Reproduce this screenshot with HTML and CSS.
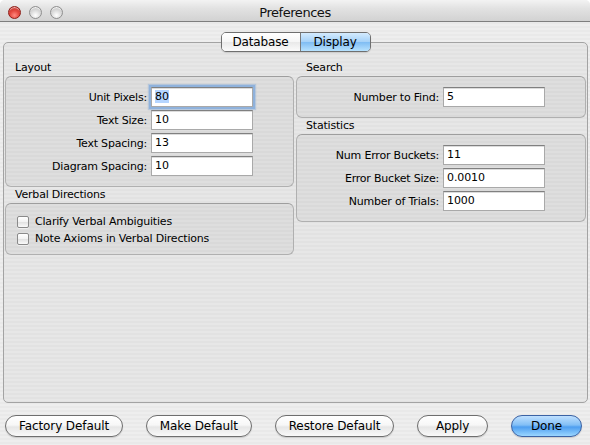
FILE: index.html
```html
<!DOCTYPE html>
<html>
<head>
<meta charset="utf-8">
<title>Preferences</title>
<link rel="stylesheet" href="styles.css">
</head>
<body>
<div class="window">
  <div class="titlebar">
    <div class="lights">
      <span class="light red"></span>
      <span class="light gray"></span>
      <span class="light gray"></span>
    </div>
    <div class="title">Preferences</div>
    <div></div>
  </div>

  <div class="tabs">
    <div class="tab tab-db">Database</div>
    <div class="tab tab-disp active">Display</div>
  </div>

  <div class="frame">
    <div class="col">
      <div class="group-title">Layout</div>
      <div class="group-box">
        <div class="row"><span class="label">Unit Pixels:</span><div class="field focus"><span class="sel">80</span></div></div>
        <div class="row"><span class="label">Text Size:</span><div class="field">10</div></div>
        <div class="row"><span class="label">Text Spacing:</span><div class="field">13</div></div>
        <div class="row"><span class="label">Diagram Spacing:</span><div class="field">10</div></div>
      </div>
      <div class="group-title">Verbal Directions</div>
      <div class="group-box checks">
        <div class="check-row"><span class="checkbox"></span><span class="label">Clarify Verbal Ambiguities</span></div>
        <div class="check-row"><span class="checkbox"></span><span class="label">Note Axioms in Verbal Directions</span></div>
      </div>
    </div>
    <div class="col">
      <div class="group-title">Search</div>
      <div class="group-box">
        <div class="row"><span class="label">Number to Find:</span><div class="field">5</div></div>
      </div>
      <div class="group-title">Statistics</div>
      <div class="group-box">
        <div class="row"><span class="label">Num Error Buckets:</span><div class="field">11</div></div>
        <div class="row"><span class="label">Error Bucket Size:</span><div class="field">0.0010</div></div>
        <div class="row"><span class="label">Number of Trials:</span><div class="field">1000</div></div>
      </div>
    </div>
  </div>

  <div class="buttons">
    <div class="btn">Factory Default</div>
    <div class="btn">Make Default</div>
    <div class="btn">Restore Default</div>
    <div class="btn">Apply</div>
    <div class="btn primary">Done</div>
  </div>
</div>
</body>
</html>
```
FILE: styles.css
```css
* { box-sizing: border-box; }
html, body { margin: 0; padding: 0; background: #fff; }
body { font-family: "DejaVu Sans", sans-serif; color: #000; }

.window {
  width: 590px;
  height: 445px;
  display: flex;
  flex-direction: column;
  border-radius: 5px 5px 0 0;
  overflow: hidden;
  background: repeating-linear-gradient(to bottom, #eeeeee 0 2px, #e9e9e9 2px 4px);
}

/* title bar */
.titlebar {
  height: 22px;
  flex: none;
  display: grid;
  grid-template-columns: 1fr auto 1fr;
  align-items: center;
  padding-top: 3px;
  background: linear-gradient(#f3f3f3, #e2e2e2 40%, #d2d2d2);
  border-bottom: 1px solid #7e7e7e;
}
.lights { display: flex; gap: 8px; padding-left: 8px; }
.light {
  width: 13px; height: 13px; border-radius: 50%;
  box-sizing: border-box;
}
.light.red {
  border: 1px solid #8e1d17;
  background: radial-gradient(circle at 50% 75%, #ff8a80 0, #e54a40 45%, #b2231c 100%);
  box-shadow: inset 0 2px 1px -1px rgba(255,255,255,.7);
}
.light.gray {
  border: 1px solid #8f8f8f;
  background: radial-gradient(circle at 50% 75%, #ffffff 0, #dadada 50%, #b6b6b6 100%);
  box-shadow: inset 0 2px 1px -1px rgba(255,255,255,.9);
}
.title {
  font-size: 13px;
  line-height: 15px;
  letter-spacing: -0.45px;
  color: #111;
}

/* tabs */
.tabs {
  align-self: center;
  display: flex;
  height: 20px;
  margin: 10px 0 -10px 1px;
  position: relative;
  z-index: 1;
  border: 1px solid #6f6f6f;
  border-radius: 5px;
  overflow: hidden;
  box-shadow: 0 1px 1px rgba(0,0,0,.12);
  font-size: 12px;
  letter-spacing: -0.15px;
}
.tab {
  display: flex;
  align-items: center;
  justify-content: center;
  height: 100%;
  background: linear-gradient(#ffffff, #f6f6f6 48%, #e9e9e9 52%, #fbfbfb);
}
.tab-db { width: 79px; border-right: 1px solid #7a7a7a; }
.tab-disp { width: 69px; }
.tab.active {
  background: linear-gradient(#d4ebfe, #a6d2f8 48%, #80bdf3 52%, #b7e2fe);
}

/* tab frame */
.frame {
  flex: 1;
  margin: 0 2px 0 3px;
  border: 1px solid #a3a3a3;
  border-radius: 5px;
  padding: 17px 1px 0;
  background: repeating-linear-gradient(to bottom, #e7e7e7 0 2px, #e2e2e2 2px 4px);
  display: grid;
  grid-template-columns: 289px 290px;
  column-gap: 2px;
  align-content: start;
  align-items: start;
}
.col { display: flex; flex-direction: column; }

.group-title {
  font-size: 11px;
  line-height: 16px;
  letter-spacing: -0.2px;
  padding-left: 10px;
}
.group-box {
  border: 1px solid #b0b0b0;
  border-top-color: #9e9e9e;
  border-radius: 6px;
  background: repeating-linear-gradient(to bottom, #dedede 0 2px, #d9d9d9 2px 4px);
  padding: 10px 0 10px;
  display: flex;
  flex-direction: column;
  gap: 3px;
}

.row {
  display: flex;
  justify-content: flex-end;
  align-items: center;
  gap: 4px;
  padding-right: 40px;
}
.label {
  font-size: 11px;
  letter-spacing: -0.2px;
  white-space: nowrap;
}
.field {
  width: 102px;
  height: 20px;
  background: #fff;
  border: 1px solid #a9a9a9;
  border-top-color: #808080;
  box-shadow: inset 0 1px 0 #dcdcdc;
  font-size: 11px;
  line-height: 18px;
  padding-left: 3px;
  letter-spacing: -0.1px;
}
.field.focus {
  box-shadow: inset 0 1px 0 #dcdcdc, 0 0 0 2px #8fb2dc, 0 0 1px 3px rgba(143,178,220,.5);
}
.sel { background: #b5d5ff; }

.checks {
  padding: 9px 0 7px 11px;
  gap: 0;
}
.check-row {
  display: flex;
  align-items: center;
  height: 17px;
  gap: 6px;
}
.checkbox {
  width: 12px;
  height: 12px;
  border: 1px solid #8a8a8a;
  border-radius: 2px;
  background: linear-gradient(#ffffff, #f2f2f2 50%, #e3e3e3 55%, #fafafa);
  box-shadow: 0 1px 0 rgba(255,255,255,.5);
}

/* buttons */
.buttons {
  display: flex;
  justify-content: space-between;
  margin: 12px 8px 8px 5px;
  flex: none;
}
.btn {
  height: 22px;
  min-width: 71px;
  padding: 0 13px;
  display: flex;
  align-items: center;
  justify-content: center;
  border: 1px solid #6e6e6e;
  border-radius: 11px;
  background: linear-gradient(#ffffff, #f7f7f7 45%, #e6e6e6 55%, #f9f9f9);
  box-shadow: 0 1px 1px rgba(0,0,0,.15);
  font-size: 12px;
  letter-spacing: -0.1px;
  white-space: nowrap;
}
.btn.primary {
  border-color: #3b62a4;
  background: linear-gradient(#bfe0ff, #82bff6 45%, #4e9ef0 55%, #9ad6ff);
}
```
